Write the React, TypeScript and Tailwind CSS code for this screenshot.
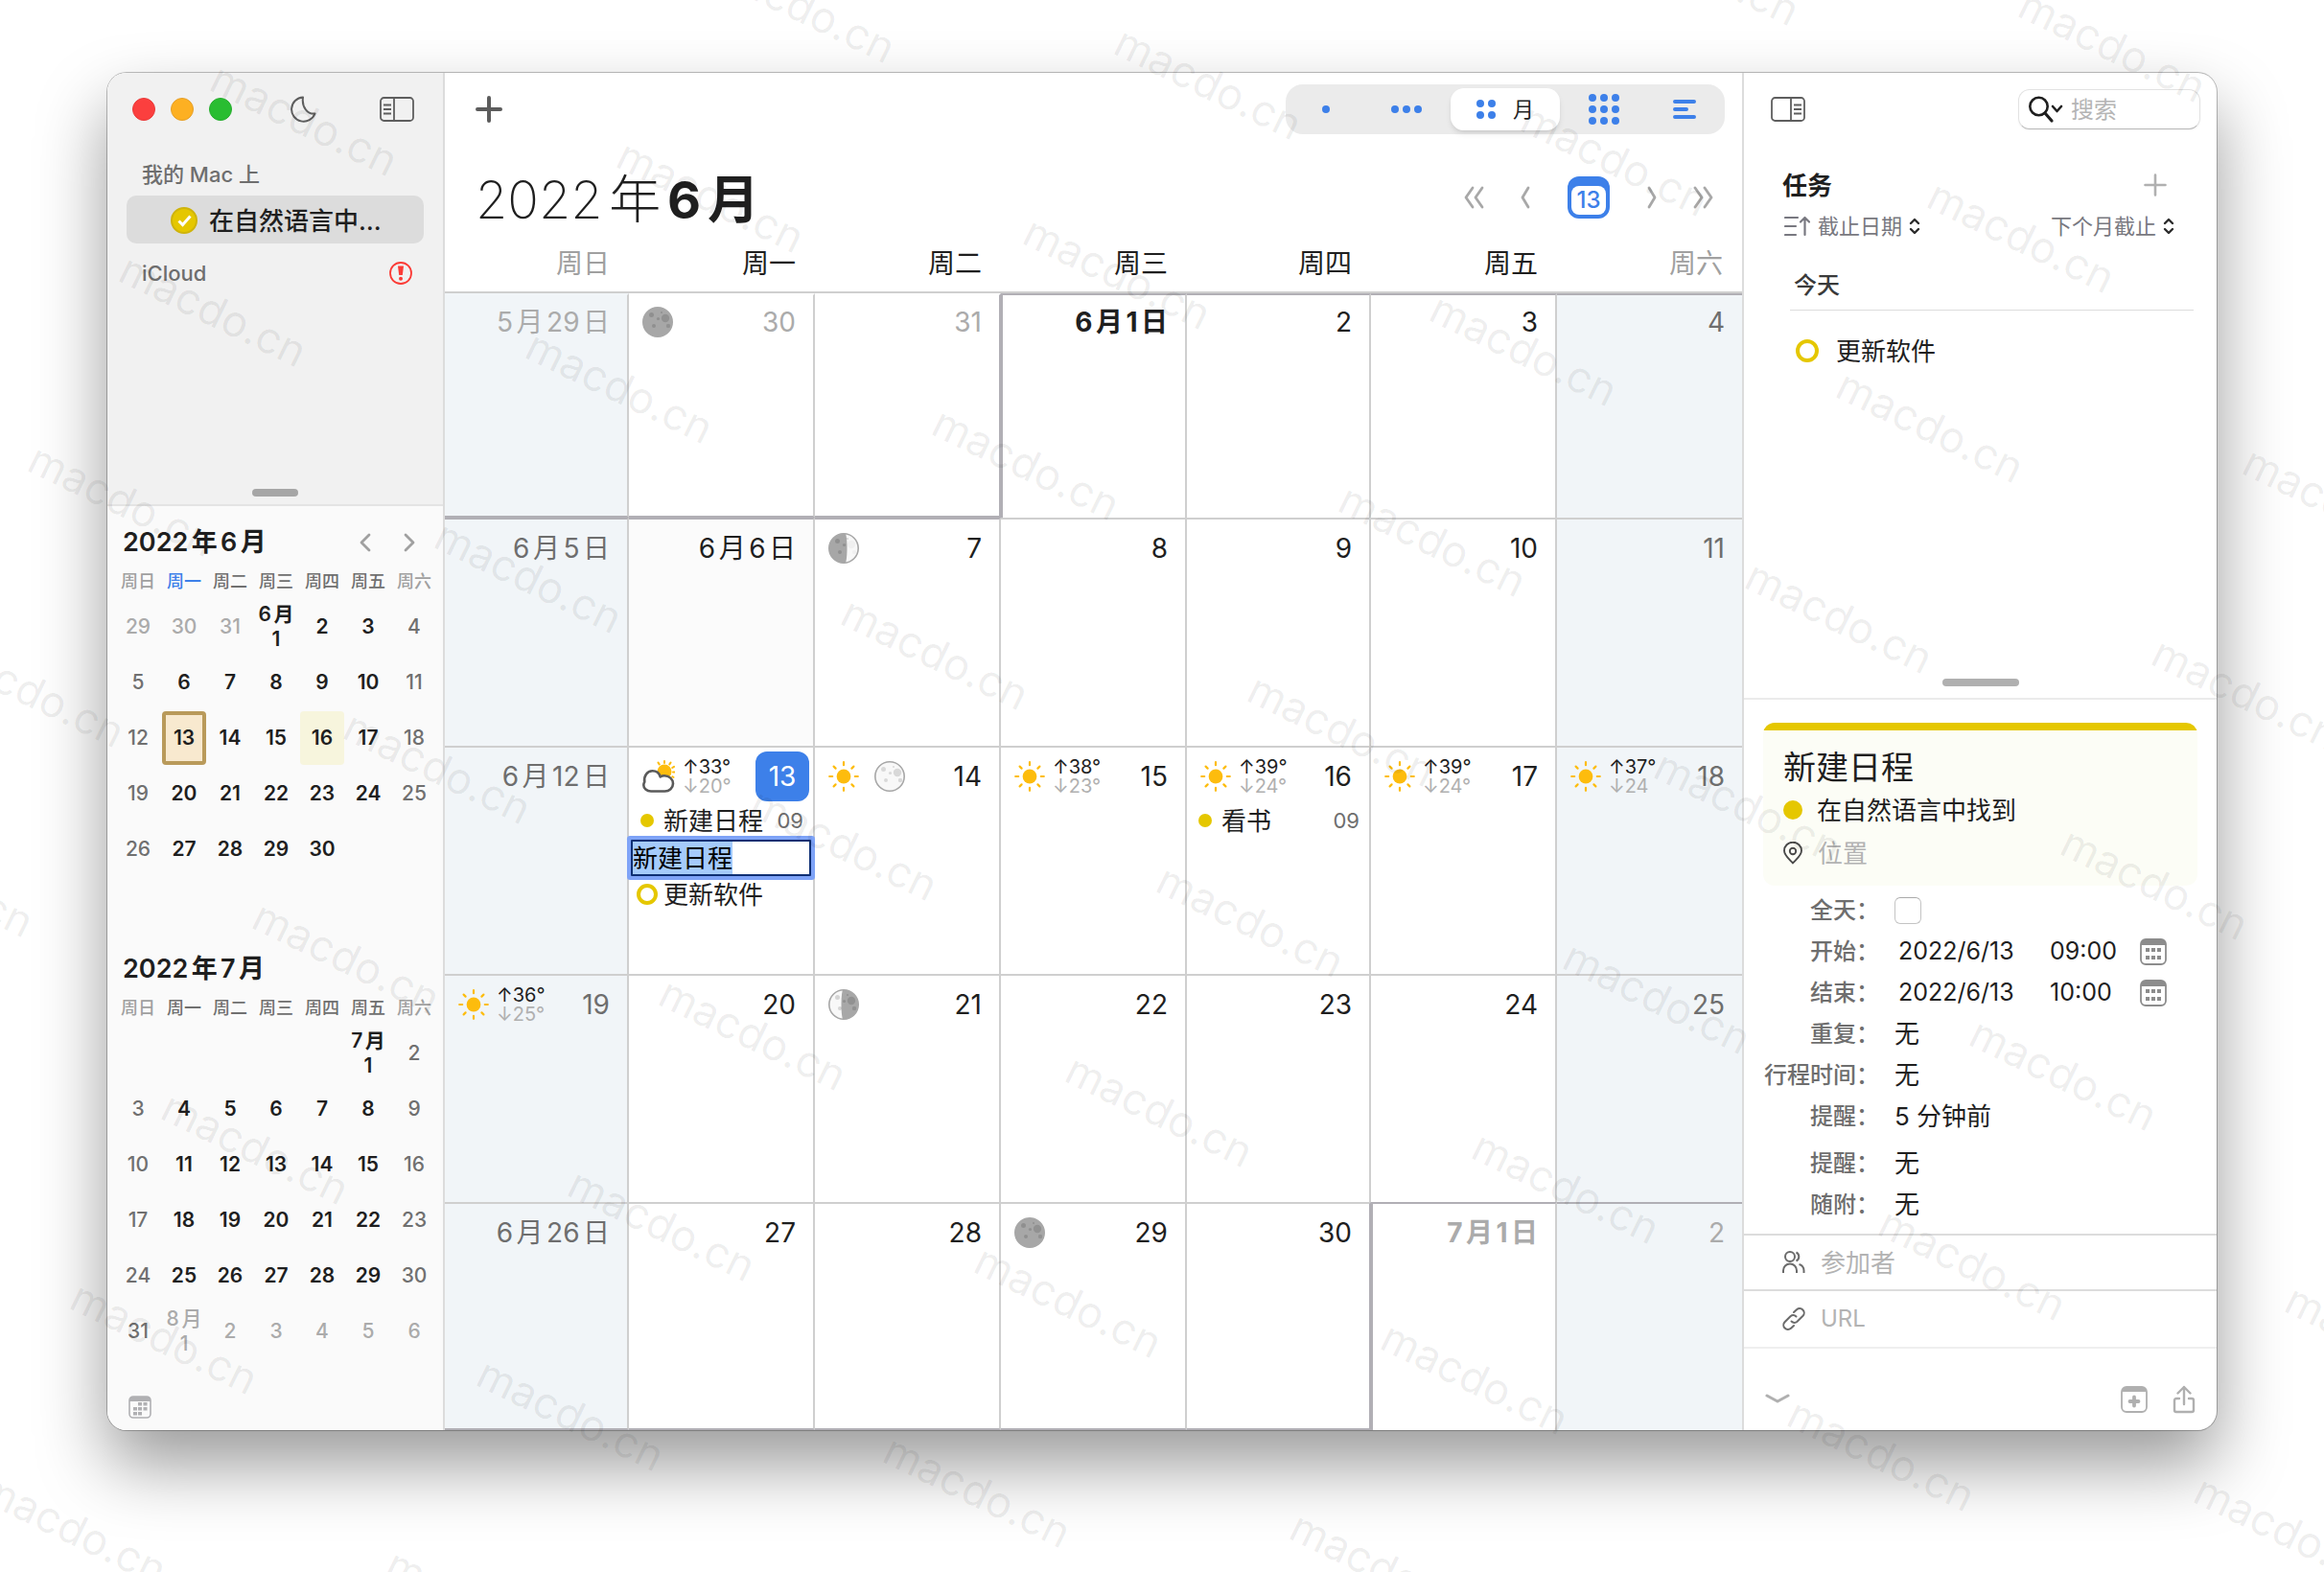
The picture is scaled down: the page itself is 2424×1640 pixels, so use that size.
import { useEffect, useRef, useState } from "react";
import type { ReactNode } from "react";

type Tone = "normal" | "weekend" | "muted";

type CalendarEvent = { id: string; kind: "event" | "draft" | "task"; title: string; hour?: string };

type Weather = { icon: "sun" | "cloud"; high?: string; low?: string };

type Day = {
  label: string;
  muted?: boolean;
  bold?: boolean;
  today?: boolean;
  tinted?: boolean;
  moon?: "new" | "full" | "first" | "last";
  weather?: Weather;
  events?: CalendarEvent[];
  edge?: string;
};

const WEEKDAYS = ["周日", "周一", "周二", "周三", "周四", "周五", "周六"];

const WEEKS: Day[][] = [
  [
    { label: "5月29日", muted: true, edge: "border-t-transparent border-b-2 border-b-[#b1afb5]" },
    { label: "30", muted: true, moon: "new", edge: "border-t-transparent border-b-2 border-b-[#b1afb5]" },
    { label: "31", muted: true, edge: "border-t-transparent border-b-2 border-b-[#b1afb5] border-r-[#b1afb5]" },
    { label: "6月1日", bold: true, edge: "border-l-2 border-l-[#b1afb5] border-t-[#b1afb5]" },
    { label: "2", edge: "border-t-[#b1afb5]" },
    { label: "3", edge: "border-t-[#b1afb5]" },
    { label: "4", edge: "border-t-[#b1afb5]" },
  ],
  [
    { label: "6月5日", edge: "border-t-[#b1afb5]" },
    { label: "6月6日", tinted: true, edge: "border-t-[#b1afb5]" },
    { label: "7", moon: "first", edge: "border-t-[#b1afb5]" },
    { label: "8" },
    { label: "9" },
    { label: "10" },
    { label: "11" },
  ],
  [
    { label: "6月12日" },
    {
      label: "13",
      today: true,
      weather: { icon: "cloud", high: "↑33°", low: "↓20°" },
      events: [
        { id: "e1", kind: "event", title: "新建日程", hour: "09" },
        { id: "e2", kind: "draft", title: "新建日程" },
        { id: "e3", kind: "task", title: "更新软件" },
      ],
    },
    { label: "14", weather: { icon: "sun" }, moon: "full" },
    { label: "15", weather: { icon: "sun", high: "↑38°", low: "↓23°" } },
    {
      label: "16",
      weather: { icon: "sun", high: "↑39°", low: "↓24°" },
      events: [{ id: "e4", kind: "event", title: "看书", hour: "09" }],
    },
    { label: "17", weather: { icon: "sun", high: "↑39°", low: "↓24°" } },
    { label: "18", weather: { icon: "sun", high: "↑37°", low: "↓24" } },
  ],
  [
    { label: "19", weather: { icon: "sun", high: "↑36°", low: "↓25°" } },
    { label: "20" },
    { label: "21", moon: "last" },
    { label: "22" },
    { label: "23" },
    { label: "24" },
    { label: "25" },
  ],
  [
    { label: "6月26日", edge: "border-b-2 border-b-[#b1afb5]" },
    { label: "27", edge: "border-b-2 border-b-[#b1afb5]" },
    { label: "28", edge: "border-b-2 border-b-[#b1afb5]" },
    { label: "29", moon: "new", edge: "border-b-2 border-b-[#b1afb5]" },
    { label: "30", edge: "border-b-2 border-b-[#b1afb5] border-r-[#b1afb5]" },
    { label: "7月1日", muted: true, bold: true, edge: "border-l-2 border-l-[#b1afb5] border-t-[#b1afb5]" },
    { label: "2", muted: true, edge: "border-t-[#b1afb5]" },
  ],
];

// A leading "-" marks a day that belongs to the neighbouring month.
const JUNE = [
  ["-29", "-30", "-31", "6月1", "2", "3", "4"],
  ["5", "6", "7", "8", "9", "10", "11"],
  ["12", "13", "14", "15", "16", "17", "18"],
  ["19", "20", "21", "22", "23", "24", "25"],
  ["26", "27", "28", "29", "30", "", ""],
  ["", "", "", "", "", "", ""],
];

const JULY = [
  ["", "", "", "", "", "7月1", "2"],
  ["3", "4", "5", "6", "7", "8", "9"],
  ["10", "11", "12", "13", "14", "15", "16"],
  ["17", "18", "19", "20", "21", "22", "23"],
  ["24", "25", "26", "27", "28", "29", "30"],
  ["31", "-8月1", "-2", "-3", "-4", "-5", "-6"],
];

const isWeekend = (col: number) => col === 0 || col === 6;

function SunIcon() {
  return (
    <svg viewBox="0 0 32 32" className="size-8 shrink-0" stroke="#fdbc0d" strokeWidth="2.2" strokeLinecap="round">
      <circle cx="16" cy="16" r="7.4" fill="#fdbc0d" stroke="none" />
      <path d="M16 1.2v3M16 27.8v3M1.2 16h3M27.8 16h3M5.6 5.6l2 2M24.4 24.4l2 2M26.4 5.6l-2 2M7.6 24.4l-2 2" />
    </svg>
  );
}

function CloudSunIcon() {
  return (
    <svg viewBox="0 0 34 34" className="size-[34px] shrink-0" fill="none" strokeLinecap="round">
      <circle cx="23" cy="12" r="7.5" fill="#fdbc0d" />
      <path
        d="M23 1v2M16.500 2.600l1.200 1.800M29.500 2.600l-1.200 1.800M33 6.800l-1.800 1.200M33.500 12.500h-1.500M32.500 18l-1.200-.8"
        stroke="#fdbc0d"
        strokeWidth="2"
      />
      <path
        d="M9 32.500C4.500 32.500 1.300 29.500 1.300 26c0-1.200.4-2.300 1-3.200C1.300 16.500 5 11.300 10.500 11.300c4 0 7.200 2.400 8.200 6.200 1.200-.8 2.700-1.200 4.300-1.200 5 0 9 3.500 9 8.200s-4 8-8.500 8z"
        fill="#fff"
        stroke="#5a5a5a"
        strokeWidth="2.6"
        strokeLinejoin="round"
      />
    </svg>
  );
}

function MoonPhase({ phase }: { phase: NonNullable<Day["moon"]> }) {
  return (
    <svg viewBox="0 0 32 32" className="size-8 shrink-0">
      <circle cx="16" cy="16" r="15.2" fill={phase === "new" ? "#a7a7a7" : "#f8f8f8"} stroke="#a7a7a7" strokeWidth="1.6" />
      {phase === "first" && <path d="M18 .8C9 0 .8 7 .8 16S9 32 18 31.200C20 26 20 6 18 .8z" fill="#a7a7a7" />}
      {phase === "last" && <path d="M15 .8C24 0 31.200 7 31.200 16S24 32 15 31.200C13 26 13 6 15 .8z" fill="#a7a7a7" />}
      <g fill="#000" fillOpacity={phase === "full" ? 0.12 : 0.14}>
        <circle cx="9.500" cy="8.500" r="2.500" />
        <circle cx="24" cy="12" r="4.200" fillOpacity={phase === "first" ? 0.03 : 0.13} />
        <circle cx="16.500" cy="12.500" r="1.600" />
        <circle cx="12" cy="20" r="2" />
        <circle cx="27" cy="20" r="2.200" fillOpacity={phase === "first" ? 0.03 : 0.13} />
        <circle cx="20" cy="6" r="1" />
      </g>
    </svg>
  );
}

function PanelIcon({ side }: { side: "left" | "right" }) {
  const left = side === "left";
  return (
    <svg viewBox="0 0 36 26" className="w-9 h-[26px]" fill="none" stroke="#5e5e5e" strokeWidth="1.8">
      <rect x="1" y="1" width="34" height="24" rx="3.5" />
      <path d={left ? "M15 1v24" : "M21 1v24"} />
      <path d={left ? "M4 8.500h8M4 13h8M4 17.500h8" : "M24 8.500h8M24 13h8M24 17.500h8"} />
    </svg>
  );
}

function Chevron({ d }: { d: string }) {
  return (
    <svg viewBox="0 0 24 24" className="size-6" fill="none" stroke="currentColor" strokeWidth="2.8" strokeLinecap="round" strokeLinejoin="round">
      <path d={d} />
    </svg>
  );
}

function UpDown() {
  return (
    <svg viewBox="0 0 12 18" className="w-3 h-[18px] shrink-0" fill="none" stroke="#2b2b2b" strokeWidth="2.4" strokeLinecap="round" strokeLinejoin="round">
      <path d="M2 6l4-4 4 4M2 12l4 4 4-4" />
    </svg>
  );
}

function DateGlyph() {
  return (
    <svg viewBox="0 0 28 28" className="size-7" fill="none">
      <rect x="1" y="1" width="26" height="26" rx="5" stroke="#8c8c8c" strokeWidth="1.8" />
      <path d="M1 7V6a5 5 0 0 1 5-5h16a5 5 0 0 1 5 5v1z" fill="#8c8c8c" />
      <path d="M6 10h4v4H6zM12 10h4v4h-4zM18 10h4v4h-4zM6 18h4v4H6zM12 18h4v4h-4zM18 18h4v4h-4z" fill="#8c8c8c" />
    </svg>
  );
}

function MiniMonth({ year, month, rows, current }: { year: string; month: string; rows: string[][]; current?: boolean }) {
  const tones: Record<Tone, string> = {
    normal: "text-[#1f1f1f] font-semibold",
    weekend: "text-[#707070] font-medium",
    muted: "text-[#ababab] font-medium",
  };

  function toneOf(value: string, col: number): Tone {
    if (value.startsWith("-")) return "muted";
    return isWeekend(col) ? "weekend" : "normal";
  }

  return (
    <section className="pl-2 pr-1.5 pt-4">
      <div className="h-11 flex items-center justify-between pl-2 pr-[18px]">
        <h2 className="text-[27px] font-semibold text-[#1f1f1f]">
          {year}年{month}月
        </h2>
        {current && (
          <div className="flex gap-5 text-[#a0a0a0]">
            <button aria-label="上个月"><Chevron d="M15 4l-8 8 8 8" /></button>
            <button aria-label="下个月"><Chevron d="M9 4l8 8-8 8" /></button>
          </div>
        )}
      </div>
      <table className="w-full table-fixed text-center">
        <thead>
          <tr>
            {WEEKDAYS.map((w, i) => (
              <th
                key={w}
                className={`h-[37px] p-0 text-[18px] font-medium ${
                  current && i === 1 ? "text-[#3d80e9]" : isWeekend(i) ? "text-[#a0a0a0]" : "text-[#707070]"
                }`}
              >
                {w}
              </th>
            ))}
          </tr>
        </thead>
        <tbody>
          {rows.map((row, r) => (
            <tr key={r}>
              {row.map((value, c) => {
                const text = value.replace("-", "");
                const split = text.indexOf("月");
                const mark =
                  current && text === "13"
                    ? "border-4 border-[#b99a5a] bg-[#f8e9cf] rounded"
                    : current && text === "16"
                      ? "bg-[#f7f5dd] rounded-sm"
                      : "";
                return (
                  <td key={c} className="h-[58px] p-0">
                    {text && (
                      <button
                        className={`w-[46px] h-14 flex flex-col items-center justify-center mx-auto text-[21px] leading-[26px] ${
                          tones[toneOf(value, c)]
                        } ${mark}`}
                      >
                        {split > 0 ? (
                          <>
                            <span>{text.slice(0, split + 1)}</span>
                            <span>{text.slice(split + 1)}</span>
                          </>
                        ) : (
                          text
                        )}
                      </button>
                    )}
                  </td>
                );
              })}
            </tr>
          ))}
        </tbody>
      </table>
    </section>
  );
}

function Sidebar() {
  return (
    <aside className="w-[352px] shrink-0 flex flex-col border-r-2 border-[#dcdcdc] bg-[#fafafa]">
      <div className="h-[452px] flex flex-col bg-[#f1f1f1] border-b-2 border-[#e4e4e4]">
        <div className="h-[76px] shrink-0 flex items-center pl-[26px] pr-[30px]">
          <div className="flex gap-4">
            <button aria-label="关闭" className="size-6 rounded-full bg-[#fb3f3e] border border-[#e93a39]" />
            <button aria-label="最小化" className="size-6 rounded-full bg-[#fdb022] border border-[#e5a02a]" />
            <button aria-label="缩放" className="size-6 rounded-full bg-[#29bd31] border border-[#26ad2d]" />
          </div>
          <button aria-label="深色模式" className="ml-[60px]">
            <svg viewBox="0 0 28 28" className="size-7" fill="none" stroke="#5e5e5e" strokeWidth="2" strokeLinejoin="round">
              <path d="M14 1.500A12.600 12.600 0 1 0 26.500 18.500C19 19.500 12.500 12 14 1.500z" />
            </svg>
          </button>
          <button aria-label="隐藏边栏" className="ml-auto"><PanelIcon side="left" /></button>
        </div>
        <div className="px-5">
          <p className="h-[52px] pl-4 pt-2 flex items-center text-[22px] font-medium text-[#6e6e6e]">我的 Mac 上</p>
          <button className="w-full h-[50px] pt-0.5 rounded-[10px] bg-[#dcdcdc] flex items-center gap-3 pl-[46px] text-[26px] font-medium text-[#1f1f1f]">
            <svg viewBox="0 0 28 28" className="size-7" fill="none">
              <circle cx="14" cy="14" r="13" fill="#e5c700" stroke="#cfb40c" strokeWidth="2" />
              <path d="M8.500 14.500l4 4 8-9" stroke="#fff" strokeWidth="3" />
            </svg>
            在自然语言中…
          </button>
          <div className="h-[62px] flex items-center justify-between pl-4 pr-3">
            <span className="text-[22px] font-medium text-[#6e6e6e]">iCloud</span>
            <svg viewBox="0 0 24 24" className="size-6" fill="none">
              <circle cx="12" cy="12" r="11" stroke="#fb3b36" strokeWidth="1.8" />
              <path d="M9 4.500h6l-1.200 9.500h-3.600z" fill="#fb3b36" />
              <circle cx="12" cy="17.800" r="2" fill="#fb3b36" />
            </svg>
          </div>
        </div>
        <div className="mt-auto mb-2 mx-auto w-12 h-2 rounded-full bg-[#a6a6a6]" />
      </div>
      <MiniMonth year="2022" month="6" rows={JUNE} current />
      <MiniMonth year="2022" month="7" rows={JULY} />
      <button aria-label="日历" className="mt-auto mb-3 ml-[22px] self-start">
        <svg viewBox="0 0 24 24" className="size-6" fill="none">
          <rect x="1" y="1" width="22" height="22" rx="4" stroke="#b0b0b3" strokeWidth="1.6" />
          <path d="M1 6V5a4 4 0 0 1 4-4h14a4 4 0 0 1 4 4v1z" fill="#b0b0b3" />
          <path
            d="M10 7h4v3.500h-4zM15.500 7h4v3.500h-4zM5 12h4v3.500H5zM10 12h4v3.500h-4zM15.500 12h4v3.500h-4zM5 17h4v3.500H5zM10 17h4v3.500h-4z"
            fill="#b0b0b3"
          />
        </svg>
      </button>
    </aside>
  );
}

function Dots({ cols, rows }: { cols: number; rows: number }) {
  return (
    <svg width={cols * 12 - 4} height={rows * 12 - 4} fill="#3d80e9">
      {Array.from({ length: cols * rows }, (_, i) => (
        <circle key={i} cx={(i % cols) * 12 + 4} cy={Math.floor(i / cols) * 12 + 4} r="4" />
      ))}
    </svg>
  );
}

function ViewSwitcher() {
  const [view, setView] = useState("month");
  const views: { id: string; label: string; icon: ReactNode }[] = [
    { id: "day", label: "日", icon: <Dots cols={1} rows={1} /> },
    { id: "week", label: "周", icon: <Dots cols={3} rows={1} /> },
    { id: "month", label: "月", icon: <Dots cols={2} rows={2} /> },
    { id: "year", label: "年", icon: <Dots cols={3} rows={3} /> },
    {
      id: "list",
      label: "列表",
      icon: (
        <svg viewBox="0 0 24 20" className="w-6 h-5" stroke="#3d80e9" strokeWidth="4" strokeLinecap="round">
          <path d="M2 2h20M2 10h12M2 18h20" />
        </svg>
      ),
    },
  ];

  return (
    <div className="h-[52px] flex items-center rounded-[18px] bg-[#ebebeb]">
      {views.map((v) =>
        v.id === view ? (
          <button key={v.id} className="w-[114px] h-11 mx-1 flex items-center justify-center gap-[18px] rounded-[14px] bg-white shadow-md text-[22px] text-[#1f1f1f]">
            {v.icon}
            {v.label}
          </button>
        ) : (
          <button key={v.id} aria-label={v.label} onClick={() => setView(v.id)} className="w-[84px] h-11 flex items-center justify-center">
            {v.icon}
          </button>
        )
      )}
    </div>
  );
}

function DraftInput({ title }: { title: string }) {
  const ref = useRef<HTMLInputElement>(null);
  const [value, setValue] = useState(title);

  useEffect(() => {
    ref.current?.focus();
    ref.current?.select();
  }, []);

  return (
    <input
      ref={ref}
      value={value}
      aria-label="日程标题"
      onChange={(e) => setValue(e.target.value)}
      className="relative h-[38px] mx-0.5 border-2 border-[#0e2f73] bg-white ring-4 ring-[#7ea3f7] rounded-[1px] outline-none text-[26px] text-black selection:bg-[#a5cbfb] selection:text-black"
    />
  );
}

function EventRow({ event }: { event: CalendarEvent }) {
  if (event.kind === "draft") return <DraftInput title={event.title} />;
  return (
    <button className={`w-full flex items-center pl-2 pr-2.5 text-[26px] text-[#1f1f1f] ${event.kind === "task" ? "h-[38px]" : "h-10"}`}>
      <span className="w-[22px] mr-1.5 flex justify-center">
        {event.kind === "task" ? (
          <span className="size-[22px] rounded-full border-4 border-[#e5c700]" />
        ) : (
          <span className="size-3.5 rounded-full bg-[#e5c700]" />
        )}
      </span>
      {event.title}
      {event.hour && <span className="ml-auto text-[22px] text-[#6e6e6e]">{event.hour}</span>}
    </button>
  );
}

function DayCell({ day, row, col }: { day: Day; row: number; col: number }) {
  const bg = isWeekend(col) ? "bg-[#f1f5f8]" : day.tinted ? "bg-[#fbfbfb]" : "bg-white";
  const color = day.muted ? "text-[#ababab]" : isWeekend(col) ? "text-[#6e6e6e]" : "text-[#1f1f1f]";

  return (
    <div
      className={`min-w-0 flex flex-col border-[#cfcfcf] border-t-2 ${row === 0 ? "pt-0.5" : "pt-1"} ${
        col < 6 ? "border-r-2" : ""
      } ${bg} ${day.edge ?? ""}`}
    >
      <div className="h-[52px] flex items-center pl-3.5">
        <div className="flex items-center gap-4">
          {day.weather && (day.weather.icon === "sun" ? <SunIcon /> : <CloudSunIcon />)}
          {day.weather?.high && (
            <p className="-ml-2 text-[20px] leading-5">
              <span className="block text-[#1f1f1f]">{day.weather.high}</span>
              <span className="block text-[#b0b0b0]">{day.weather.low}</span>
            </p>
          )}
          {day.moon && <MoonPhase phase={day.moon} />}
        </div>
        {day.today ? (
          <span className="ml-auto mr-1 w-14 h-[52px] flex items-center justify-center rounded-xl bg-[#3d80e9] text-[28px] text-white">
            {day.label}
          </span>
        ) : (
          <span className={`ml-auto mr-[18px] text-[28px] whitespace-nowrap ${color} ${day.bold ? "font-bold" : ""}`}>{day.label}</span>
        )}
      </div>
      {day.events?.map((e) => <EventRow key={e.id} event={e} />)}
    </div>
  );
}

function MonthView() {
  return (
    <main className="flex-1 min-w-0 flex flex-col">
      <div className="h-[76px] flex items-center justify-between pl-8 pr-[18px]">
        <button aria-label="新建">
          <svg viewBox="0 0 28 28" className="size-7" stroke="#5c5c5c" strokeWidth="4" strokeLinecap="round">
            <path d="M14 2v24M2 14h24" />
          </svg>
        </button>
        <ViewSwitcher />
      </div>
      <div className="h-[104px] flex items-center justify-between pl-8 pr-7 pt-1">
        <h1 className="pt-1 text-[54px] text-[#1f1f1f]">
          <span className="font-extralight">2022年</span>
          <span className="font-bold">6月</span>
        </h1>
        <div className="flex items-center text-[#a8a8a8]">
          <button aria-label="上一年"><Chevron d="M11 2L4 12l7 10M21 2l-7 10 7 10" /></button>
          <button aria-label="上个月" className="ml-[30px]"><Chevron d="M15 2L9 12l6 10" /></button>
          <button aria-label="今天" className="ml-8 size-11 rounded-xl bg-[#3d80e9] px-1 pb-1 pt-2.5">
            <span className="size-full flex items-center justify-center rounded-lg bg-white text-[24px] leading-none font-medium text-[#3d80e9]">13</span>
          </button>
          <button aria-label="下个月" className="ml-8"><Chevron d="M9 2l6 10-6 10" /></button>
          <button aria-label="下一年" className="ml-[30px]"><Chevron d="M3 2l7 10-7 10M13 2l7 10-7 10" /></button>
        </div>
      </div>
      <div className="h-[50px] grid grid-cols-[192fr_194fr_194fr_194fr_192fr_194fr_193fr] items-center pb-2.5 border-b-2 border-[#cfcfcf]">
        {WEEKDAYS.map((w, i) => (
          <span key={w} className={`text-right pr-5 text-[28px] leading-9 ${isWeekend(i) ? "text-[#a0a0a0]" : "text-[#1f1f1f]"}`}>
            {w}
          </span>
        ))}
      </div>
      <div className="flex-1 grid grid-cols-[192fr_194fr_194fr_194fr_192fr_194fr_193fr] grid-rows-[234fr_238fr_238fr_238fr_238fr]">
        {WEEKS.flatMap((week, r) => week.map((day, c) => <DayCell key={`${r}-${c}`} day={day} row={r} col={c} />))}
      </div>
    </main>
  );
}

function TaskPanel() {
  return (
    <section className="h-[654px] flex flex-col border-b-2 border-[#ebebeb]">
      <div className="h-[76px] shrink-0 flex items-center justify-between pl-7 pr-[17px]">
        <button aria-label="隐藏详情"><PanelIcon side="right" /></button>
        <label className="w-[190px] h-[42px] flex items-center pl-2.5 rounded-xl bg-white border border-[#e2e2e2] border-b-[#b9b9b9] shadow-xs">
          <svg viewBox="0 0 36 30" className="w-9 h-[30px] shrink-0" fill="none" stroke="#1f1f1f" strokeWidth="2.6" strokeLinecap="round" strokeLinejoin="round">
            <circle cx="10.500" cy="12" r="9.200" />
            <path d="M17 19l7 8" strokeWidth="3.2" />
            <path d="M25 12l4.500 5 4.500-5" />
          </svg>
          <input aria-label="搜索" placeholder="搜索" className="w-full min-w-0 pl-2 pt-0.5 text-[24px] outline-none placeholder:text-[#b5b5b5]" />
        </label>
      </div>
      <div className="mt-5 h-[42px] flex items-center justify-between pl-10 pr-[52px]">
        <h2 className="text-[26px] font-bold text-[#1f1f1f]">任务</h2>
        <button aria-label="新建任务">
          <svg viewBox="0 0 24 24" className="size-6" stroke="#b0b0b0" strokeWidth="2.6" strokeLinecap="round">
            <path d="M12 1.500v21M1.500 12h21" />
          </svg>
        </button>
      </div>
      <div className="h-11 flex items-center justify-between pl-[42px] pr-11 text-[22px] text-[#787880]">
        <div className="flex items-center">
          <svg viewBox="0 0 27 22" className="w-[27px] h-[22px] mr-2" fill="none" stroke="#787880" strokeWidth="2.2" strokeLinecap="round" strokeLinejoin="round">
            <path d="M1 2h13M1 11h11M1 20h11M21.500 20V2M17 6.500L21.500 2 26 6.500" />
          </svg>
          <select aria-label="排序" className="appearance-none bg-transparent pr-1.5"><option>截止日期</option></select>
          <UpDown />
        </div>
        <div className="flex items-center">
          <select aria-label="范围" className="appearance-none bg-transparent pr-1.5"><option>下个月截止</option></select>
          <UpDown />
        </div>
      </div>
      <div className="ml-12 mr-6 mt-4 h-[50px] pl-1 pb-0.5 flex items-center border-b border-[#dcdcdc] text-[24px] font-medium text-[#3a3a3a]">今天</div>
      <label className="mt-[22px] ml-[54px] h-10 flex items-center gap-[18px] text-[26px] text-[#1f1f1f]">
        <input type="checkbox" className="appearance-none size-6 rounded-full border-4 border-[#e5c700]" />
        更新软件
      </label>
      <div className="mt-auto mb-3 mx-auto w-20 h-2 rounded-full bg-[#b0b0b0]" />
    </section>
  );
}

function FormRow({ label, htmlFor, children }: { label: string; htmlFor?: string; children: ReactNode }) {
  return (
    <div className="h-[43px] flex items-center">
      <label htmlFor={htmlFor} className="w-[141px] text-right text-[24px] font-medium text-[#6e6e6e] whitespace-nowrap">
        {label}：
      </label>
      <div className="flex-1 flex items-center pl-4 text-[26px] text-[#1f1f1f]">{children}</div>
    </div>
  );
}

function DateFields({ id, time }: { id: string; time: string }) {
  return (
    <>
      <input id={id} defaultValue="2022/6/13" className="w-[158px] pl-1 text-[25px] outline-none" />
      <input aria-label="时间" defaultValue={time} className="w-[94px] pl-1 text-[25px] outline-none" />
      <button aria-label="选择日期" className="ml-1"><DateGlyph /></button>
    </>
  );
}

function PlainSelect({ id, value }: { id: string; value: string }) {
  return (
    <select id={id} className="appearance-none bg-transparent">
      <option>{value}</option>
    </select>
  );
}

function EventPanel() {
  return (
    <section className="flex-1 flex flex-col text-[#1f1f1f]">
      <div className="mx-5 mt-6 h-[170px] rounded-xl overflow-hidden bg-[#fcfdf6]">
        <div className="h-2 bg-[#e5c700]" />
        <div className="pl-[21px]">
          <h2 className="mt-3.5 h-12 flex items-center text-[34px]">新建日程</h2>
          <p className="h-[42px] flex items-center gap-[15px] text-[26px]">
            <span className="size-5 rounded-full bg-[#e5c700]" />
            在自然语言中找到
          </p>
          <label className="h-12 flex items-center gap-4 text-[26px]">
            <svg viewBox="0 0 20 24" className="w-5 h-6 shrink-0" fill="none" stroke="#4a4a4a" strokeWidth="1.9" strokeLinejoin="round">
              <path d="M10 22.500C7 19 1 14.500 1 9.500a9 8.800 0 0 1 18 0C19 14.500 13 19 10 22.500z" />
              <circle cx="10" cy="10" r="3.200" />
            </svg>
            <input aria-label="位置" placeholder="位置" className="min-w-0 outline-none placeholder:text-[#b3b3b3]" />
          </label>
        </div>
      </div>
      <div className="mt-1 pb-[9px]">
        <FormRow label="全天" htmlFor="all-day">
          <input id="all-day" type="checkbox" className="appearance-none size-7 rounded-md border border-[#c4c4c4] border-t-[#a9a9a9] bg-white" />
        </FormRow>
        <FormRow label="开始" htmlFor="start"><DateFields id="start" time="09:00" /></FormRow>
        <FormRow label="结束" htmlFor="end"><DateFields id="end" time="10:00" /></FormRow>
        <FormRow label="重复" htmlFor="repeat"><PlainSelect id="repeat" value="无" /></FormRow>
        <FormRow label="行程时间" htmlFor="travel"><PlainSelect id="travel" value="无" /></FormRow>
        <FormRow label="提醒" htmlFor="alert-1"><PlainSelect id="alert-1" value="5 分钟前" /></FormRow>
        <div className="mt-1.5">
          <FormRow label="提醒" htmlFor="alert-2"><PlainSelect id="alert-2" value="无" /></FormRow>
          <FormRow label="随附" htmlFor="attach"><PlainSelect id="attach" value="无" /></FormRow>
        </div>
      </div>
      <label className="h-[58px] flex items-center gap-4 pl-10 border-t-2 border-[#dcdcdc] text-[26px]">
        <svg viewBox="0 0 24 24" className="size-6 shrink-0" fill="none" stroke="#6b6b6b" strokeWidth="2">
          <circle cx="8" cy="6" r="5" />
          <path d="M1 23v-2.500a7 7 0 0 1 14 0V23M14.500 1.500a5 5 0 0 1 0 9M17.500 14a7 7 0 0 1 5 6.500V23" />
        </svg>
        <input aria-label="参加者" placeholder="参加者" className="outline-none placeholder:text-[#b3b3b3]" />
      </label>
      <label className="h-[60px] flex items-center gap-4 pl-10 border-t-2 border-[#dcdcdc] text-[24px]">
        <svg viewBox="0 0 24 24" className="size-6 shrink-0" fill="none" stroke="#6b6b6b" strokeWidth="2" strokeLinecap="round">
          <path d="M9.500 14.500a4.500 4.500 0 0 0 6 .3l6-6a4.600 4.600 0 0 0-6.500-6.500l-3 2.700M14.500 9.500a4.500 4.500 0 0 0-6-.3l-6 6a4.600 4.600 0 0 0 6.500 6.500l3-2.700" />
        </svg>
        <input aria-label="URL" placeholder="URL" className="outline-none placeholder:text-[#b3b3b3]" />
      </label>
      <div className="flex-1 flex items-center border-t-2 border-[#efefef] pt-5 px-[22px] text-[#b0b0b0]">
        <button aria-label="收起">
          <svg viewBox="0 0 26 12" className="w-[26px] h-3" fill="none" stroke="currentColor" strokeWidth="3" strokeLinecap="round" strokeLinejoin="round">
            <path d="M2 2l11 6 11-6" />
          </svg>
        </button>
        <button aria-label="添加到日历" className="ml-auto">
          <svg viewBox="0 0 28 28" className="size-7" fill="none">
            <rect x="1" y="1" width="26" height="26" rx="5" stroke="currentColor" strokeWidth="1.8" />
            <path d="M1 6a5 5 0 0 1 5-5h16a5 5 0 0 1 5 5z" fill="currentColor" />
            <path d="M14 11.500v9M9.500 16h9" stroke="currentColor" strokeWidth="3.8" strokeLinecap="round" />
          </svg>
        </button>
        <button aria-label="分享" className="ml-[26px]">
          <svg viewBox="0 0 24 30" className="w-6 h-[30px]" fill="none" stroke="currentColor" strokeWidth="2.4" strokeLinecap="round" strokeLinejoin="round">
            <path d="M7 14H4a2 2 0 0 0-2 2v10a2 2 0 0 0 2 2h16a2 2 0 0 0 2-2V16a2 2 0 0 0-2-2h-3M12 20V2M5.500 8.500L12 2l6.500 6.500" />
          </svg>
        </button>
      </div>
    </section>
  );
}

// Staggered diagonal stamps laid across the whole page, each row shifted back a little.
const STAMPS = Array.from({ length: 9 }, (_, i) => i - 1).flatMap((i) =>
  Array.from({ length: 14 }, (_, j) => j - 4).map((j) => ({
    key: `${i}:${j}`,
    left: Math.round(233 + 424 * i - 95 * j),
    top: Math.round(58 + 80 * i + 198.5 * j),
  }))
);

function Watermark() {
  return (
    <div aria-hidden="true" className="absolute inset-0 overflow-hidden pointer-events-none select-none">
      {STAMPS.filter((s) => s.left > -220 && s.left < 2440 && s.top > -110 && s.top < 1640).map((s) => (
        <span
          key={s.key}
          style={{ left: s.left, top: s.top }}
          className="absolute origin-top-left rotate-[26deg] text-[45px] leading-none text-black/7"
        >
          macdo.cn
        </span>
      ))}
    </div>
  );
}

export default function App() {
  return (
    <div className="relative min-h-screen flex bg-white px-28 pt-[76px] pb-[148px] font-[Inter,'Noto_Sans_CJK_SC',sans-serif] [text-autospace:normal]">
      <div className="flex-1 min-w-0 flex overflow-hidden rounded-[20px] bg-white shadow-[0_0_0_1px_rgba(0,0,0,0.25),0_36px_72px_rgba(0,0,0,0.4)]">
        <Sidebar />
        <MonthView />
        <aside className="w-[495px] shrink-0 flex flex-col border-l-2 border-[#dcdcdc]">
          <TaskPanel />
          <EventPanel />
        </aside>
      </div>
      <Watermark />
    </div>
  );
}
